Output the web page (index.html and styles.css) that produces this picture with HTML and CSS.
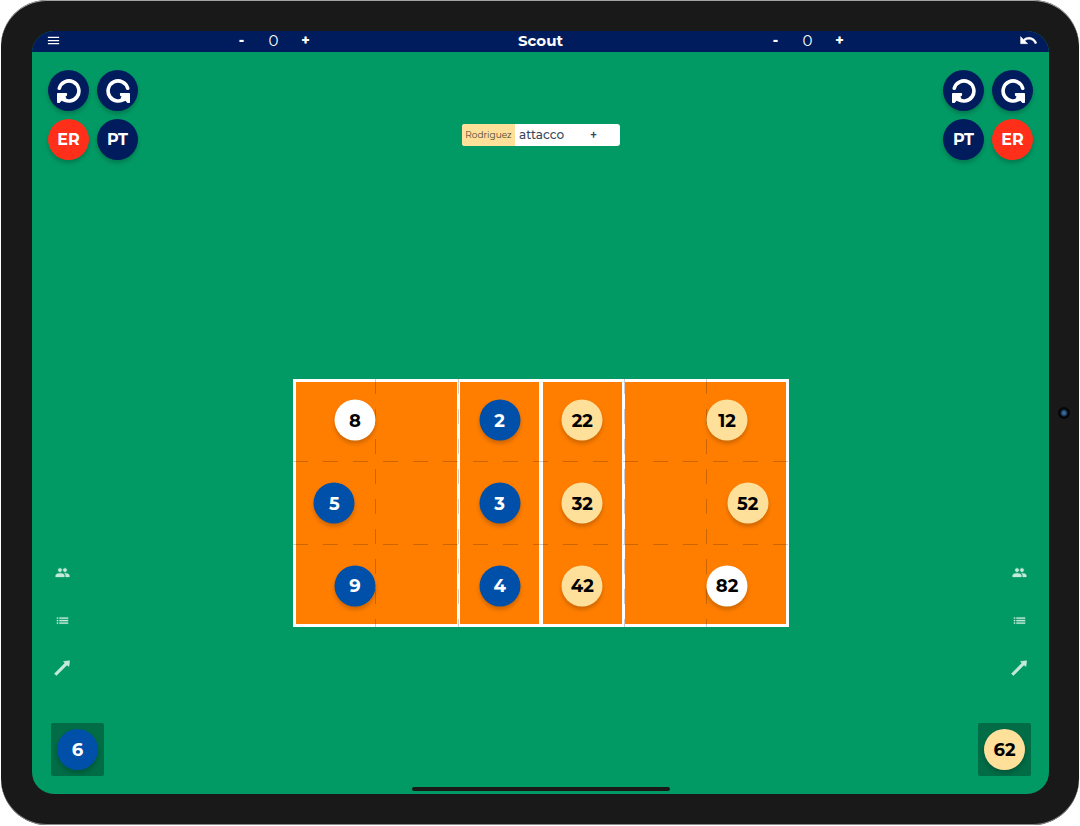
FILE: index.html
```html
<!DOCTYPE html>
<html lang="it">
<head>
<meta charset="utf-8">
<meta name="viewport" content="width=device-width, initial-scale=1">
<title>Scout</title>
<link rel="stylesheet" href="styles.css">
</head>
<body>
<svg class="sprite" aria-hidden="true">
  <symbol id="i-menu" viewBox="0 0 24 24"><path d="M3 18h18v-2H3v2zm0-5h18v-2H3v2zm0-7v2h18V6H3z"/></symbol>
  <symbol id="i-undo" viewBox="0 0 24 24"><path d="M12.5 8c-2.65 0-5.05.99-6.9 2.6L2 7v9h9l-3.62-3.62c1.39-1.16 3.16-1.88 5.12-1.88 3.54 0 6.55 2.31 7.6 5.5l2.37-.78C21.08 11.03 17.15 8 12.5 8z" stroke="currentColor" stroke-width=".6"/></symbol>
  <symbol id="i-rotate" viewBox="0 0 26 26"><path d="M3.300 10.200A10 10 0 1 1 6 20.200" fill="none" stroke="currentColor" stroke-width="3.600" stroke-linecap="round"/><path d="M1.800 15.800H10.300V17L8.300 18.500 9.600 20.500 7 22.500 5.500 21.800 3.200 24.200H1.800z" stroke="currentColor" stroke-width="1.600" stroke-linejoin="round"/></symbol>
  <symbol id="i-people" viewBox="0 0 24 24"><path d="M16 11c1.66 0 2.99-1.34 2.99-3S17.66 5 16 5s-3 1.34-3 3 1.34 3 3 3zm-8 0c1.66 0 2.99-1.34 2.99-3S9.66 5 8 5 5 6.34 5 8s1.34 3 3 3zm0 2c-2.33 0-7 1.17-7 3.5V19h14v-2.500c0-2.330-4.670-3.500-7-3.500zm8 0c-.29 0-.62.02-.97.05 1.160.84 1.970 1.970 1.970 3.450V19h6v-2.500c0-2.330-4.670-3.500-7-3.500z" stroke="currentColor" stroke-width=".5"/></symbol>
  <symbol id="i-list" viewBox="0 0 24 24"><path d="M3 13h2v-2H3v2zm0 4h2v-2H3v2zm0-8h2V7H3v2zm4 4h14v-2H7v2zm0 4h14v-2H7v2zM7 7v2h14V7H7z" stroke="currentColor" stroke-width=".4"/></symbol>
  <symbol id="i-arrow" viewBox="0 0 16 16"><path d="M15.600.8 14.900 6.400 13 4.900 2.400 15.500.5 13.700 11 3.100 9.500 1.500z" stroke="currentColor" stroke-width=".6"/></symbol>
</svg>

<div class="device">
  <div class="screen">
    <header class="topbar">
      <button class="bar-btn menu" aria-label="Menu"><svg class="ico-15"><use href="#i-menu"/></svg></button>
      <div class="score">
        <button class="bar-btn">-</button><output>0</output><button class="bar-btn">+</button>
      </div>
      <h1>Scout</h1>
      <div class="score">
        <button class="bar-btn">-</button><output>0</output><button class="bar-btn">+</button>
      </div>
      <button class="bar-btn undo" aria-label="Annulla"><svg class="ico-19"><use href="#i-undo"/></svg></button>
    </header>

    <main class="field">
      <section class="side home">
        <div class="actions">
          <button class="round navy" aria-label="Ruota indietro"><svg class="ico-rot"><use href="#i-rotate"/></svg></button>
          <button class="round navy" aria-label="Ruota avanti"><svg class="ico-rot flip"><use href="#i-rotate"/></svg></button>
          <button class="round red">ER</button>
          <button class="round navy">PT</button>
        </div>
        <div class="tools">
          <button aria-label="Giocatori"><svg class="ico-15"><use href="#i-people"/></svg></button>
          <button aria-label="Elenco"><svg class="ico-15"><use href="#i-list"/></svg></button>
          <button aria-label="Traiettoria"><svg class="ico-16"><use href="#i-arrow"/></svg></button>
        </div>
        <div class="bench"><button class="round blue">6</button></div>
      </section>

      <section class="center">
        <div class="event">
          <span class="event-player">Rodriguez</span>
          <span class="event-skill">attacco</span>
          <span class="event-mark">+</span>
        </div>
        <div class="court">
          <svg class="lines" viewBox="0 0 496 248" aria-hidden="true">
            <rect width="496" height="248" fill="#ff7e00"/>
            <g fill="none" stroke="#fff">
              <rect x="1.500" y="1.500" width="493" height="245" stroke-width="3"/>
              <path d="M165.500 0V248M330.500 0V248" stroke-width="3"/>
              <path d="M248 0V248" stroke-width="4"/>
            </g>
            <path class="zones" d="M0 82.500H496M0 165.500H496M82.500 0V248M165.500 0V248M331.500 0V248M413.500 0V248"/>
          </svg>
          <button class="round white col-2 row-1">8</button>
          <button class="round blue col-1 row-2">5</button>
          <button class="round blue col-2 row-3">9</button>
          <button class="round blue col-3 row-1">2</button>
          <button class="round blue col-3 row-2">3</button>
          <button class="round blue col-3 row-3">4</button>
          <button class="round sand col-4 row-1">22</button>
          <button class="round sand col-4 row-2">32</button>
          <button class="round sand col-4 row-3">42</button>
          <button class="round sand col-5 row-1">12</button>
          <button class="round sand col-6 row-2">52</button>
          <button class="round white col-5 row-3">82</button>
        </div>
      </section>

      <section class="side away">
        <div class="actions">
          <button class="round navy" aria-label="Ruota indietro"><svg class="ico-rot"><use href="#i-rotate"/></svg></button>
          <button class="round navy" aria-label="Ruota avanti"><svg class="ico-rot flip"><use href="#i-rotate"/></svg></button>
          <button class="round navy">PT</button>
          <button class="round red">ER</button>
        </div>
        <div class="tools">
          <button aria-label="Giocatori"><svg class="ico-15"><use href="#i-people"/></svg></button>
          <button aria-label="Elenco"><svg class="ico-15"><use href="#i-list"/></svg></button>
          <button aria-label="Traiettoria"><svg class="ico-16"><use href="#i-arrow"/></svg></button>
        </div>
        <div class="bench"><button class="round sand">62</button></div>
      </section>
    </main>
    <div class="home-indicator"></div>
  </div>
  <div class="camera"></div>
</div>
</body>
</html>
```

FILE: styles.css
```css
* { box-sizing: border-box; }

body {
  margin: 0;
  background: #fff;
  font-family: Montserrat, Inter, "Open Sans", sans-serif;
}

button {
  margin: 0;
  padding: 0;
  border: 0;
  background: none;
  color: inherit;
  font: inherit;
  cursor: pointer;
}

svg { display: block; fill: currentColor; }
.sprite { display: none; }
.ico-15 { width: 15px; height: 15px; }
.ico-16 { width: 16px; height: 16px; }
.ico-19 { width: 19px; height: 19px; }
.ico-rot { width: 26px; height: 26px; }
.flip { transform: scaleX(-1); }

/* Tablet */
.device {
  position: relative;
  display: flex;
  min-height: calc(100vh - 1px);
  margin: 0 1px 1px;
  padding: 31px 30px 31px 31px;
  border-radius: 46px;
  background: #191919;
  box-shadow: inset 0 1px 0 #a3a5a4, inset 0 -1px 0 #8a8a8a;
}

.screen {
  position: relative;
  flex: 1;
  display: flex;
  flex-direction: column;
  overflow: hidden;
  border-radius: 22px;
  background: #029a64;
}

.camera {
  position: absolute;
  top: 50%;
  right: 9px;
  width: 12px;
  height: 12px;
  margin-top: -6px;
  border-radius: 50%;
  background: radial-gradient(circle, #3d6f9f 0 1px, #16304f 3px, #050607 4px);
}

.home-indicator {
  position: absolute;
  bottom: 3px;
  left: 50%;
  width: 258px;
  height: 4px;
  border-radius: 2px;
  background: #191919;
  transform: translateX(-50%);
}

/* Top bar */
.topbar {
  display: grid;
  grid-template-columns: 108px 1fr 1fr 1fr 108px;
  align-items: center;
  height: 21px;
  padding-bottom: 2px;
  background: #001c5d;
  color: #fff;
}

.topbar h1 {
  margin: 0;
  font-size: 15px;
  line-height: 19px;
  font-weight: 700;
  text-align: center;
}

.bar-btn { font-size: 14px; line-height: 19px; font-weight: 800; }
.menu { justify-self: start; margin-left: 14px; }
.undo { justify-self: end; margin-right: 11px; }

.score {
  display: grid;
  grid-template-columns: repeat(3, 32px);
  justify-content: center;
  text-align: center;
}

.score output { font-size: 15px; line-height: 19px; font-weight: 400; }

/* Field */
.field {
  flex: 1;
  display: grid;
  grid-template-columns: 261px 1fr 260px;
}

.side {
  display: flex;
  flex-direction: column;
  align-items: flex-start;
  padding: 18px 16px;
}

.away { align-items: flex-end; }

.actions {
  display: grid;
  grid-template-columns: repeat(2, 41px);
  gap: 8px;
}

.round {
  display: flex;
  align-items: center;
  justify-content: center;
  width: 41px;
  height: 41px;
  border-radius: 50%;
  font-size: 18px;
  line-height: 24px;
  font-weight: 700;
  box-shadow: 0 3px 4px rgba(0, 0, 0, 0.2);
}

.actions .round { font-size: 16px; }

.navy { background: #001c5d; color: #fff; }
.red { background: #ff2f1a; color: #fff; }
.blue { background: #004fa8; color: #fff; }
.sand { background: #ffe09a; color: #000; }
.white { background: #fff; color: #000; }

.tools {
  display: flex;
  flex-direction: column;
  gap: 24px;
  margin-top: auto;
  color: #c5e9da;
}

.tools button {
  display: flex;
  align-items: center;
  justify-content: center;
  width: 28px;
  height: 24px;
}

.bench {
  margin: 43px 2px 0 3px;
  padding: 6px;
  border-radius: 2px;
  background: #016c46;
}

/* Centre column */
.center {
  display: flex;
  flex-direction: column;
  align-items: center;
  padding-top: 72px;
}

.event {
  display: grid;
  grid-template-columns: 53px 52px 53px;
  align-items: center;
  overflow: hidden;
  border-radius: 3px;
  background: #fff;
  color: #38475a;
  line-height: 22px;
}

.event-player {
  background: #ffe09a;
  color: #4b4230;
  font-size: 9px;
  text-align: center;
}

.event-skill { padding-left: 4px; font-size: 12px; font-weight: 500; }
.event-mark { font-size: 12px; font-weight: 600; text-align: center; }

.court {
  position: relative;
  width: 100%;
  margin-top: 233px;
}

.lines { width: 100%; height: auto; }

.zones {
  fill: none;
  stroke: #000;
  stroke-opacity: 0.2;
  stroke-width: 1;
  stroke-dasharray: 15 15;
}

.court .round {
  position: absolute;
  transform: translate(-50%, -50%);
}

.col-1 { left: 8.33%; }
.col-2 { left: 12.5%; }
.col-3 { left: 41.67%; }
.col-4 { left: 58.33%; }
.col-5 { left: 87.5%; }
.col-6 { left: 91.67%; }
.row-1 { top: 16.67%; }
.row-2 { top: 50%; }
.row-3 { top: 83.33%; }
```
